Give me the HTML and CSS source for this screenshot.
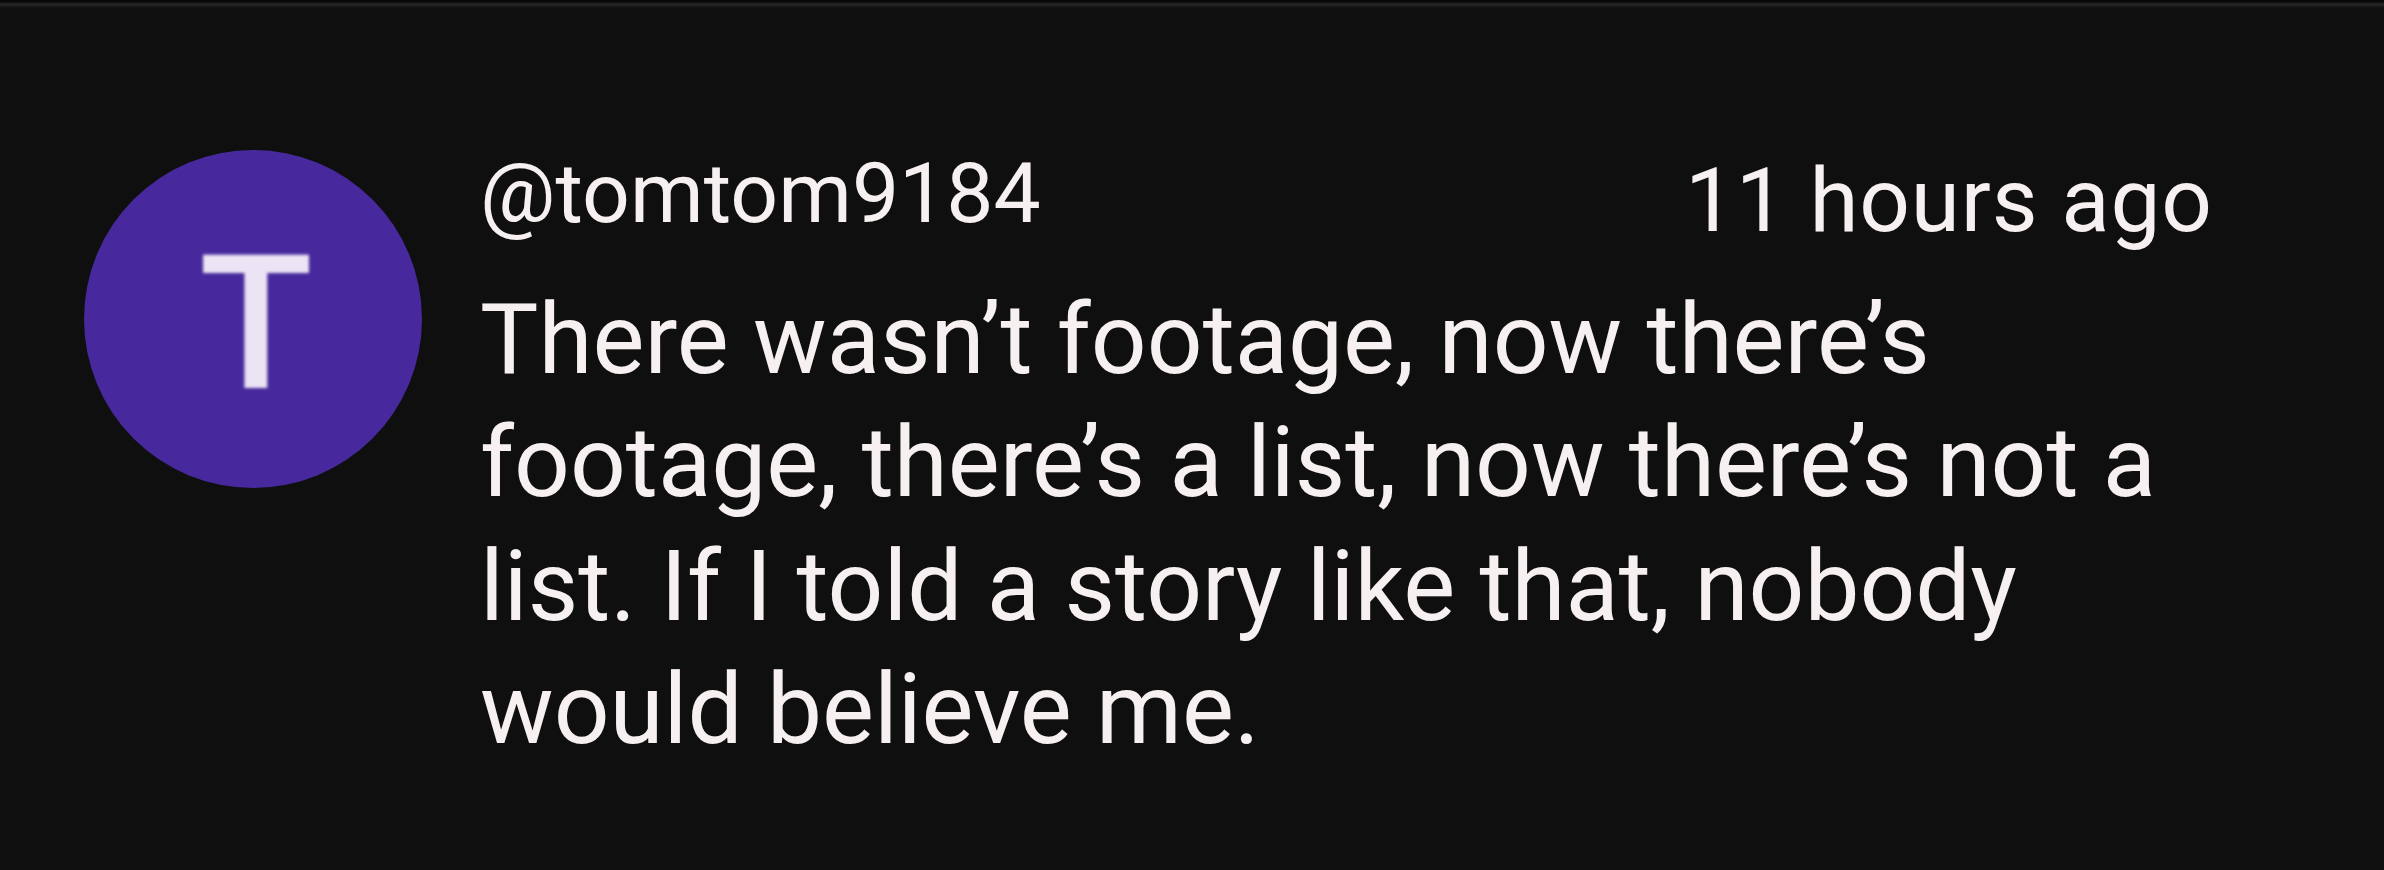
FILE: index.html
```html
<!DOCTYPE html>
<html lang="en">
<head>
<meta charset="utf-8">
<title>Comment</title>
<link rel="stylesheet" href="styles.css">
</head>
<body>
<div class="topbar"></div>
<div class="comment">
  <div class="avatar"><span class="avatar-letter">T</span></div>
  <div class="content">
    <div class="header">
      <span class="username">@tomtom9184</span>
      <span class="time">11 hours ago</span>
    </div>
    <p class="text">There wasn’t footage, now there’s footage, there’s a list, now there’s not a list. If I told a story like that, nobody would believe me.</p>
  </div>
</div>
</body>
</html>
```

FILE: styles.css
```css
html, body {
  margin: 0;
  padding: 0;
  background: #0f0f0f;
}
body {
  width: 2384px;
  height: 870px;
  overflow: hidden;
  font-family: Roboto, "Liberation Sans", sans-serif;
  color: #f6f0f0;
}
.topbar {
  height: 8px;
  background: linear-gradient(to bottom, #070707 0px, #0a0a0a 2px, #262626 4px, #1e1e1e 6px, #0f0f0f 8px);
}
.comment {
  display: flex;
  align-items: flex-start;
  padding: 136px 172px 0 84px;
  gap: 58px;
}
.avatar {
  flex: none;
  width: 338px;
  height: 338px;
  margin-top: 6px;
  border-radius: 50%;
  background: #47299d;
  display: flex;
  align-items: center;
  justify-content: center;
  box-sizing: border-box;
  padding: 11px 0 0 6px;
}
.avatar-letter {
  font-size: 187px;
  font-weight: 500;
  line-height: 1;
  color: #ece4f4;
  filter: blur(1.5px);
}
.content {
  flex: 1;
  min-width: 0;
}
.header {
  display: flex;
  justify-content: space-between;
  align-items: flex-start;
  height: 108px;
}
.username {
  font-size: 84px;
  line-height: 100px;
}
.time {
  font-size: 89px;
  line-height: 100px;
  letter-spacing: 0.8px;
  margin-right: -0.8px;
  margin-top: 7px;
}
.text {
  margin: 26px 0 0;
  font-size: 98px;
  line-height: 123.3px;
}
```
